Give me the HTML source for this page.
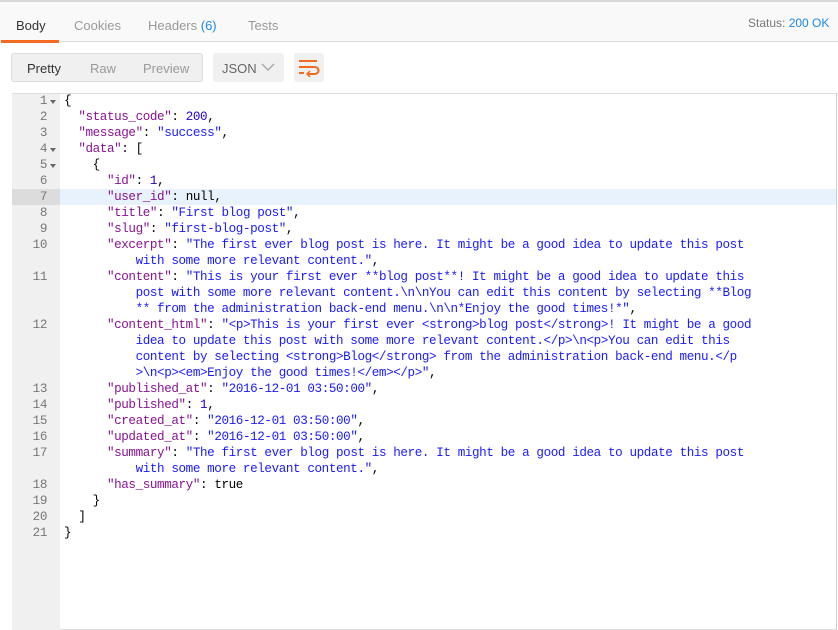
<html><head><style>
body{margin:0;width:838px;height:630px;background:#fff;font-family:"Liberation Sans",sans-serif;position:relative;overflow:hidden}
.top{position:absolute;left:0;top:0;width:838px;height:42px;background:#f9f9f9;border-top:2px solid #d8d8d8;border-bottom:1px solid #ddd;box-sizing:border-box}
.tab{position:absolute;top:16px;font-size:13px;color:#999}
.ul{position:absolute;left:1px;top:38px;width:58px;height:3px;background:#f26b21}
.btns{position:absolute;left:11px;top:53px;width:192px;height:29px;background:#f0f0f0;border:1px solid #dcdcdc;border-radius:3px;box-sizing:border-box}
.b{position:absolute;top:61px;font-size:13px;color:#999}
.json{position:absolute;left:213px;top:53px;width:71px;height:29px;background:#f0f0f0;border-radius:3px}
.wrap{position:absolute;left:294px;top:53px;width:30px;height:29px;background:#f0f0f0;border-radius:3px}
.ed{position:absolute;left:12px;top:93px;width:825px;height:537px;border:1px solid #ddd;border-right:1px solid #ccc;box-sizing:border-box}
.gut{position:absolute;left:12px;top:94px;width:48px;height:536px;background:#f0f0f0}
.hl{position:absolute;left:60px;top:189px;width:776px;height:16px;background:#e8f2fc}
.hlg{position:absolute;left:12px;top:189px;width:48px;height:16px;background:#dcdcdc}
pre{margin:0;position:absolute;top:93px;font-family:"Liberation Mono",monospace;font-size:12.6px;line-height:16px;letter-spacing:-0.4px}
.ln{position:absolute;left:12px;width:35px;text-align:right;color:#777;font-family:"Liberation Mono",monospace;font-size:12.6px;line-height:16px;letter-spacing:-0.4px}
.ar{position:absolute;left:50px;width:0;height:0;border-left:3px solid transparent;border-right:3px solid transparent;border-top:4px solid #666}
.code{left:64px;color:#000}
.k{color:#881391}.s{color:#1a1aff}.n{color:#1c00cf}
</style></head><body>
<div class="top">
<span class="tab" style="left:16px;color:#333">Body</span>
<span class="tab" style="left:74px">Cookies</span>
<span class="tab" style="left:148px">Headers <b style="color:#1e88e5;font-weight:normal">(6)</b></span>
<span class="tab" style="left:248px">Tests</span>
<span class="tab" style="left:748px;top:14px;font-size:12px;color:#777">Status: <span style="color:#1e88e5">200 OK</span></span>
<div class="ul"></div>
</div>
<div class="btns"></div>
<span class="b" style="left:27px;color:#333">Pretty</span>
<span class="b" style="left:90px">Raw</span>
<span class="b" style="left:143px">Preview</span>
<div class="json"></div>
<span class="b" style="left:222px;color:#666">JSON</span>
<svg style="position:absolute;left:261px;top:63px" width="14" height="9"><path d="M1 1 L7 7 L13 1" fill="none" stroke="#aaa" stroke-width="1.5"/></svg>
<div class="wrap"></div>
<svg style="position:absolute;left:298px;top:59px" width="22" height="18"><path d="M1 2 H19 M1 8 H17 a3.5 3.5 0 0 1 0 7 H10 M1 14 H6" fill="none" stroke="#f26b21" stroke-width="2"/><path d="M12 12 L9 15 L12 18" fill="none" stroke="#f26b21" stroke-width="1.5"/></svg>
<div class="ed"></div>
<div class="gut"></div>
<div class="hlg"></div>
<div class="hl"></div>
<div class="ln" style="top:93px">1</div><div class="ar" style="top:100px"></div>
<div class="ln" style="top:109px">2</div>
<div class="ln" style="top:125px">3</div>
<div class="ln" style="top:141px">4</div><div class="ar" style="top:148px"></div>
<div class="ln" style="top:157px">5</div><div class="ar" style="top:164px"></div>
<div class="ln" style="top:173px">6</div>
<div class="ln" style="top:189px">7</div>
<div class="ln" style="top:205px">8</div>
<div class="ln" style="top:221px">9</div>
<div class="ln" style="top:237px">10</div>
<div class="ln" style="top:269px">11</div>
<div class="ln" style="top:317px">12</div>
<div class="ln" style="top:381px">13</div>
<div class="ln" style="top:397px">14</div>
<div class="ln" style="top:413px">15</div>
<div class="ln" style="top:429px">16</div>
<div class="ln" style="top:445px">17</div>
<div class="ln" style="top:477px">18</div>
<div class="ln" style="top:493px">19</div>
<div class="ln" style="top:509px">20</div>
<div class="ln" style="top:525px">21</div>
<pre class="code">{
  <span class="k">"status_code"</span>: <span class="n">200</span>,
  <span class="k">"message"</span>: <span class="s">"success"</span>,
  <span class="k">"data"</span>: [
    {
      <span class="k">"id"</span>: <span class="n">1</span>,
      <span class="k">"user_id"</span>: null,
      <span class="k">"title"</span>: <span class="s">"First blog post"</span>,
      <span class="k">"slug"</span>: <span class="s">"first-blog-post"</span>,
      <span class="k">"excerpt"</span>: <span class="s">"The first ever blog post is here. It might be a good idea to update this post</span>
<span class="s">          with some more relevant content."</span>,
      <span class="k">"content"</span>: <span class="s">"This is your first ever **blog post**! It might be a good idea to update this</span>
<span class="s">          post with some more relevant content.\n\nYou can edit this content by selecting **Blog</span>
<span class="s">          ** from the administration back-end menu.\n\n*Enjoy the good times!*"</span>,
      <span class="k">"content_html"</span>: <span class="s">"&lt;p&gt;This is your first ever &lt;strong&gt;blog post&lt;/strong&gt;! It might be a good</span>
<span class="s">          idea to update this post with some more relevant content.&lt;/p&gt;\n&lt;p&gt;You can edit this</span>
<span class="s">          content by selecting &lt;strong&gt;Blog&lt;/strong&gt; from the administration back-end menu.&lt;/p</span>
<span class="s">          &gt;\n&lt;p&gt;&lt;em&gt;Enjoy the good times!&lt;/em&gt;&lt;/p&gt;"</span>,
      <span class="k">"published_at"</span>: <span class="s">"2016-12-01 03:50:00"</span>,
      <span class="k">"published"</span>: <span class="n">1</span>,
      <span class="k">"created_at"</span>: <span class="s">"2016-12-01 03:50:00"</span>,
      <span class="k">"updated_at"</span>: <span class="s">"2016-12-01 03:50:00"</span>,
      <span class="k">"summary"</span>: <span class="s">"The first ever blog post is here. It might be a good idea to update this post</span>
<span class="s">          with some more relevant content."</span>,
      <span class="k">"has_summary"</span>: true
    }
  ]
}</pre>
</body></html>
